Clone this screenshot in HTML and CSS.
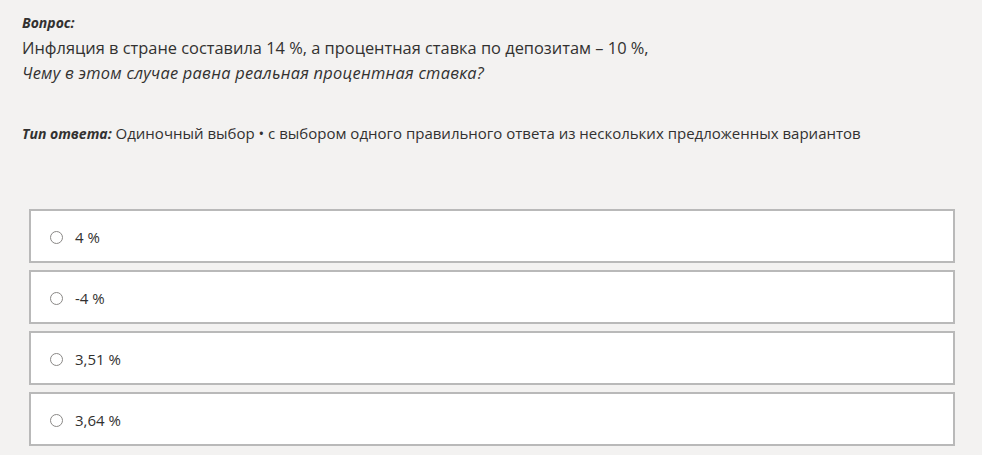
FILE: index.html
```html
<!DOCTYPE html>
<html lang="ru">
<head>
    <meta charset="UTF-8">
    <title>Вопрос</title>
    <link rel="stylesheet" href="styles.css">
</head>
<body>
    <div class="question">
        <div class="label">Вопрос:</div>
        <div class="text">Инфляция в стране составила 14 %, а процентная ставка по депозитам – 10 %,</div>
        <div class="text italic">Чему в этом случае равна реальная процентная ставка?</div>
    </div>

    <div class="answer-type">
        <span class="label">Тип ответа:</span> Одиночный выбор • с выбором одного правильного ответа из нескольких предложенных вариантов
    </div>

    <div class="options">
        <label class="option"><span class="radio"></span>4 %</label>
        <label class="option"><span class="radio"></span>-4 %</label>
        <label class="option"><span class="radio"></span>3,51 %</label>
        <label class="option"><span class="radio"></span>3,64 %</label>
    </div>
</body>
</html>
```

FILE: styles.css
```css
body {
    margin: 0;
    padding: 10px 27px 0 22px;
    background-color: #f3f2f1;
    color: #323130;
    font-family: 'Open Sans', 'Noto Sans', sans-serif;
    font-size: 15px;
}

.question {
    line-height: 25px;
}

.label {
    font-weight: bold;
    font-style: italic;
    font-size: 14px;
}

.text {
    font-size: 16.4px;
}

.italic {
    font-style: italic;
    letter-spacing: 0.25px;
}

.answer-type {
    margin-top: 36px;
    line-height: 24px;
}

.options {
    margin-top: 63px;
    margin-left: 7px;
    display: flex;
    flex-direction: column;
    gap: 7px;
}

.option {
    display: flex;
    align-items: center;
    box-sizing: border-box;
    height: 54px;
    padding: 2px 0 0 19px;
    background-color: #fff;
    border: 2px solid #b9b9b9;
}

.radio {
    width: 11px;
    height: 11px;
    border: 1px solid #8a8886;
    border-radius: 50%;
    margin-right: 12px;
}
```
